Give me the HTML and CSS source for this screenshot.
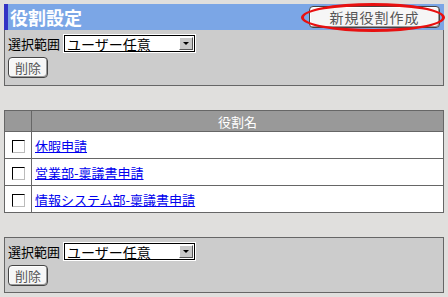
FILE: index.html
```html
<!DOCTYPE html>
<html lang="ja">
<head>
    <meta charset="UTF-8">
    <title>役割設定</title>
    <link rel="stylesheet" href="styles.css">
</head>
<body>
    <div class="page">
        <div class="title-bar">
            <h1>役割設定</h1>
            <div class="new-wrap">
                <button class="btn btn-new">新規役割作成</button>
                <span class="mark"></span>
            </div>
        </div>
        <div class="panel">
            <div class="range">
                <label>選択範囲</label>
                <div class="select"><span>ユーザー任意</span><i class="arrow"></i></div>
            </div>
            <button class="btn">削除</button>
        </div>

        <table class="roles">
            <tr>
                <th class="chk"></th>
                <th>役割名</th>
            </tr>
            <tr>
                <td class="chk"><span class="box"></span></td>
                <td><a href="#">休暇申請</a></td>
            </tr>
            <tr>
                <td class="chk"><span class="box"></span></td>
                <td><a href="#">営業部-稟議書申請</a></td>
            </tr>
            <tr>
                <td class="chk"><span class="box"></span></td>
                <td><a href="#">情報システム部-稟議書申請</a></td>
            </tr>
        </table>

        <div class="panel panel-bottom">
            <div class="range">
                <label>選択範囲</label>
                <div class="select"><span>ユーザー任意</span><i class="arrow"></i></div>
            </div>
            <button class="btn">削除</button>
        </div>
    </div>
</body>
</html>
```

FILE: styles.css
```css
body {
    margin: 0;
    background-color: #e0dfdd;
    font-family: "Noto Sans CJK JP", "DejaVu Sans", sans-serif;
    font-size: 13px;
    color: #000;
}
.page {
    padding: 4px 4px 0 4px;
}
.title-bar {
    height: 26px;
    background-color: #7ba6e6;
    border-left: 4px solid #3333c4;
    display: flex;
    align-items: center;
    justify-content: space-between;
}
.title-bar h1 {
    margin: 0 0 0 2px;
    font-size: 18px;
    font-weight: bold;
    color: #fff;
    line-height: 26px;
}
.new-wrap {
    position: relative;
    margin-right: 4px;
}
.btn {
    font-family: inherit;
    font-size: 13px;
    color: #555;
    background: #f6f6f6;
    border: 1px solid #444;
    border-radius: 4px;
    box-shadow: inset -1px -1px 0 #999, inset 1px 1px 0 #fff;
    padding: 0 6px;
    height: 21px;
    line-height: 19px;
}
.btn-new {
    width: 131px;
    height: 22px;
    font-size: 14px;
    letter-spacing: 1px;
    display: block;
}
.mark {
    position: absolute;
    left: -8px;
    top: -3px;
    width: 144px;
    height: 29px;
    border: 3px solid #e81010;
    border-radius: 50%;
    box-sizing: border-box;
}
.panel {
    background-color: #cccccc;
    border: 1px solid #666;
    border-top: none;
    padding: 5px 3px 5px 3px;
    height: 45px;
}
.panel-bottom {
    margin-top: 24px;
    border-top: 1px solid #666;
    height: 44px;
}
.range {
    display: flex;
    align-items: center;
    gap: 4px;
    margin-bottom: 5px;
}
.range label {
    line-height: 17px;
}
.select {
    width: 131px;
    height: 17px;
    background: #fff;
    border: 1px solid #000;
    box-shadow: 0 0 0 1px #fff;
    display: flex;
    align-items: center;
    justify-content: space-between;
    box-sizing: border-box;
    padding-left: 2px;
    font-size: 14px;
}
.arrow {
    width: 14px;
    height: 13px;
    margin-right: 1px;
    background: #c8c8c8;
    border: 1px solid #fff;
    border-right-color: #555;
    border-bottom-color: #555;
    box-sizing: border-box;
    position: relative;
}
.arrow::after {
    content: "";
    position: absolute;
    left: 3px;
    top: 4px;
    border-left: 3px solid transparent;
    border-right: 3px solid transparent;
    border-top: 3px solid #000;
}
.roles {
    margin-top: 24px;
    width: 440px;
    border-collapse: collapse;
    background: #fff;
}
.roles th {
    background-color: #999;
    color: #fff;
    font-weight: normal;
    height: 20px;
    border: 1px solid #666;
    font-size: 13px;
    padding: 0;
}
.roles td {
    border: 1px solid #666;
    height: 26px;
    padding: 0 3px;
    font-size: 13px;
}
.roles .chk {
    width: 20px;
    text-align: center;
}
.box {
    display: inline-block;
    width: 11px;
    height: 11px;
    border: 1px solid #000;
    border-right-color: #bbb;
    border-bottom-color: #bbb;
    background: #fff;
    vertical-align: middle;
}
.roles a {
    color: #0000ee;
}
```
